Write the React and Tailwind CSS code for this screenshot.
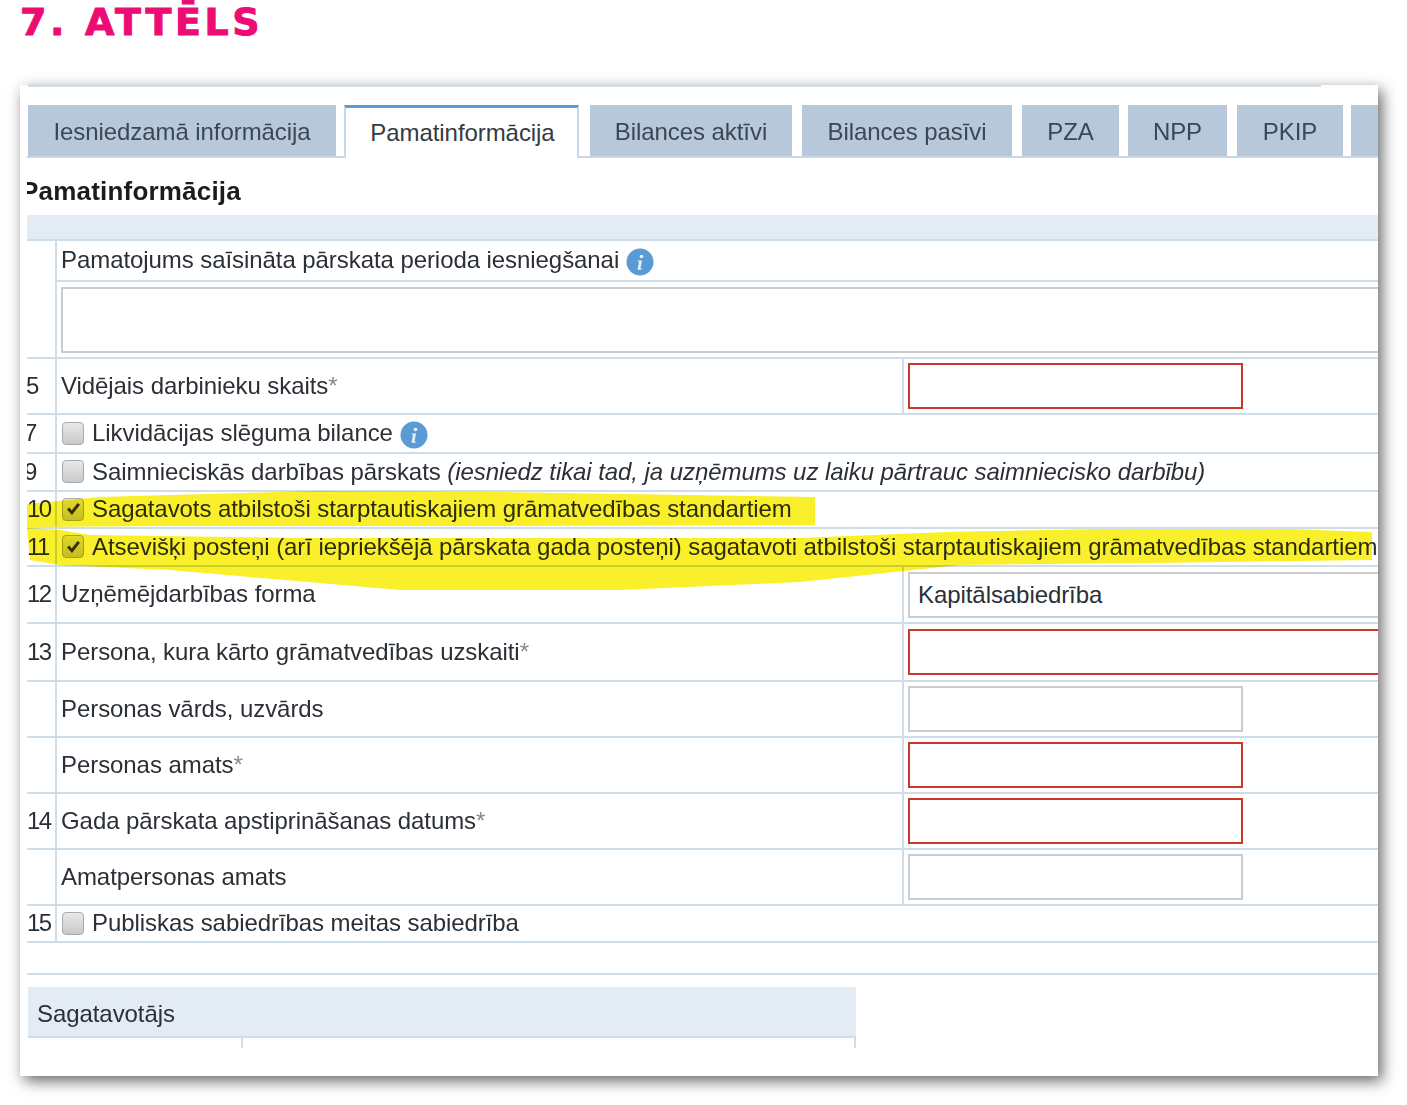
import React from 'react';

const tabs = [
  { label: 'Iesniedzamā informācija', cls: 'w-[308px] mr-[8px]' },
  { label: 'Pamatinformācija', cls: 'w-[235px] mr-[11px]', active: true },
  { label: 'Bilances aktīvi', cls: 'w-[202px] mr-[10px]' },
  { label: 'Bilances pasīvi', cls: 'w-[210px] mr-[10px]' },
  { label: 'PZA', cls: 'w-[97px] mr-[9px]' },
  { label: 'NPP', cls: 'w-[99px] mr-[10px]' },
  { label: 'PKIP', cls: 'w-[106px] mr-[8px]' },
  { label: '', cls: 'w-[40px]' },
];

function InfoIcon() {
  return (
    <svg width="28" height="28" viewBox="0 0 28 28" className="ml-[7px] mt-[3px] shrink-0">
      <circle cx="14" cy="14" r="13.5" fill="#5b9bd5" />
      <circle cx="15.5" cy="8.5" r="1.8" fill="#e8f1fa" />
      <path d="M12 12.5h4l-1.6 8h1.4l-.3 1.3h-4l1.6-8h-1.4z" fill="#e8f1fa" />
    </svg>
  );
}

function Checkbox({ checked }) {
  return (
    <span className="w-[22px] h-[23px] shrink-0 ml-[1px] mr-[8px] rounded-[4px] border border-[#aaaaaa] bg-gradient-to-b from-[#e8e8e8] to-[#c9c9c9] flex items-center justify-center">
      {checked && (
        <svg width="18" height="18" viewBox="0 0 18 18">
          <path d="M3 9.5l2.2-2 2.6 3L13.6 3 16 4.8 8 15z" fill="#333" />
        </svg>
      )}
    </span>
  );
}

function Input({ kind, wide, children }) {
  const border = kind === 'error' ? 'border-[#c9392b]' : 'border-[#cccccc]';
  const width = wide ? 'w-[500px]' : 'w-[335px]';
  return (
    <div className={`${width} h-[46px] shrink-0 border-2 ${border} bg-white pl-[8px] flex items-center`}>
      {children}
    </div>
  );
}

function Star() {
  return <span className="text-[#8a8a8a]">*</span>;
}

function Row({ h, num, numCls = '', children, value }) {
  return (
    <div className={`${h} flex border-b-2 border-[#cfdde9]`}>
      <div className="w-[30px] shrink-0 border-r-2 border-[#cfdde9] overflow-hidden flex items-center tracking-[-1.5px] pb-[1px]">
        <span className={numCls}>{num}</span>
      </div>
      <div className="flex-1 min-w-0 flex items-center pl-[4px] pb-[1px] whitespace-nowrap">{children}</div>
      {value && (
        <div className="w-[476px] shrink-0 border-l-2 border-[#cfdde9] pl-[4px] flex items-center overflow-hidden">
          {value}
        </div>
      )}
    </div>
  );
}

export default function App() {
  return (
    <div className="relative w-[1407px] h-[1105px] overflow-hidden bg-white font-['Liberation_Sans',Arial,sans-serif] text-[24px] tracking-[-0.07px] text-[#2b2f36]">
      <h1 className="pl-[20px] h-[85px] font-['DejaVu_Sans',sans-serif] font-bold text-[38px] leading-[44px] tracking-[0.095em] text-[#ec0c73] [-webkit-text-stroke:1px_#ec0c73]">
        7. ATTĒLS
      </h1>

      <div className="ml-[20px] w-[1358px] h-[991px] bg-white shadow-[4px_5px_14px_rgba(0,0,0,0.6)] pl-[7px] overflow-hidden blur-[0.4px]">
        <div className="h-[2px] w-[1293px] ml-[1px] bg-[#cfdde9]" />

        {/* вкладки */}
        <div className="mt-[18px] h-[53px] pl-[1px] flex border-b-2 border-[#c9d8e6] whitespace-nowrap">
          {tabs.map((t) => (
            <div
              key={t.label || 'more'}
              className={`${t.cls} shrink-0 flex items-center justify-center ${
                t.active
                  ? 'h-[53px] bg-white border-t-[3px] border-x-2 border-t-[#5b9bd5] border-x-[#c9d8e6] text-[#333b45] relative z-10 pl-[2px]'
                  : 'h-[51px] bg-[#b6c8da] text-[#3c4654] pt-[3px]'
              }`}
            >
              {t.label}
            </div>
          ))}
        </div>

        <div className="h-[57px] overflow-hidden flex items-center pt-[9px]">
          <span className="font-bold text-[26px] tracking-[0.2px] text-[#1c1c1c] -ml-[6px]">Pamatinformācija</span>
        </div>

        <div className="h-[26px] bg-[#e3ebf4] border-b-2 border-[#cfdde9]" />

        <div className="flex h-[118px] border-b-2 border-[#cfdde9]">
          <div className="w-[30px] shrink-0 border-r-2 border-[#cfdde9]" />
          <div className="flex-1 min-w-0">
            <div className="h-[41px] flex items-center pl-[4px] pb-[1px] border-b-2 border-[#cfdde9] whitespace-nowrap">
              Pamatojums saīsināta pārskata perioda iesniegšanai
              <InfoIcon />
            </div>
            <div className="mt-[5px] ml-[4px] h-[66px] w-[1340px] border-2 border-[#cccccc]" />
          </div>
        </div>

        <Row h="h-[56px]" num="5" numCls="-ml-[1px]" value={<Input kind="error" />}>
          Vidējais darbinieku skaits<Star />
        </Row>
        <Row h="h-[39px]" num="7" numCls="-ml-[3px]">
          <Checkbox />
          Likvidācijas slēguma bilance
          <InfoIcon />
        </Row>
        <Row h="h-[38px]" num="9" numCls="-ml-[3px]">
          <Checkbox />
          Saimnieciskās darbības pārskats&nbsp;
          <i>(iesniedz tikai tad, ja uzņēmums uz laiku pārtrauc saimniecisko darbību)</i>
        </Row>
        <Row h="h-[37px]" num="10">
          <Checkbox checked />
          Sagatavots atbilstoši starptautiskajiem grāmatvedības standartiem
        </Row>
        <Row h="h-[38px]" num="11">
          <Checkbox checked />
          Atsevišķi posteņi (arī iepriekšējā pārskata gada posteņi) sagatavoti atbilstoši starptautiskajiem grāmatvedības standartiem
        </Row>
        <Row h="h-[57px]" num="12" value={<Input wide>Kapitālsabiedrība</Input>}>
          Uzņēmējdarbības forma
        </Row>
        <Row h="h-[58px]" num="13" value={<Input kind="error" wide />}>
          Persona, kura kārto grāmatvedības uzskaiti<Star />
        </Row>
        <Row h="h-[56px]" value={<Input />}>
          Personas vārds, uzvārds
        </Row>
        <Row h="h-[56px]" value={<Input kind="error" />}>
          Personas amats<Star />
        </Row>
        <Row h="h-[56px]" num="14" value={<Input kind="error" />}>
          Gada pārskata apstiprināšanas datums<Star />
        </Row>
        <Row h="h-[56px]" value={<Input />}>
          Amatpersonas amats
        </Row>
        <Row h="h-[37px]" num="15">
          <Checkbox />
          Publiskas sabiedrības meitas sabiedrība
        </Row>

        <div className="h-[32px] border-b-2 border-[#cfdde9]" />

        <div className="mt-[12px] w-[828px] ml-[1px]">
          <div className="h-[51px] bg-[#e3ebf4] border-b-2 border-[#cfdde9] pl-[9px] pt-[5px] flex items-center">
            Sagatavotājs
          </div>
          <div className="h-[10px] flex border-r-2 border-[#cfdde9]">
            <div className="w-[215px] border-r-2 border-[#cfdde9]" />
          </div>
        </div>
      </div>

      {/* маркер поверх текста */}
      <svg width="1407" height="1105" className="absolute inset-0 mix-blend-multiply pointer-events-none">
        <path
          d="M27 504L100 497L315 491L500 492L815 497L815 525L500 526L160 526L27 527Z"
          fill="#f9ef2b"
        />
        <path
          d="M27 528L60 530L90 535L300 538L800 538L947 532L1100 529L1290 529L1372 532L1372 560L1150 563L960 565L800 582L620 590L400 590L170 570L60 565L30 560Z"
          fill="#f9ef2b"
        />
      </svg>
    </div>
  );
}
